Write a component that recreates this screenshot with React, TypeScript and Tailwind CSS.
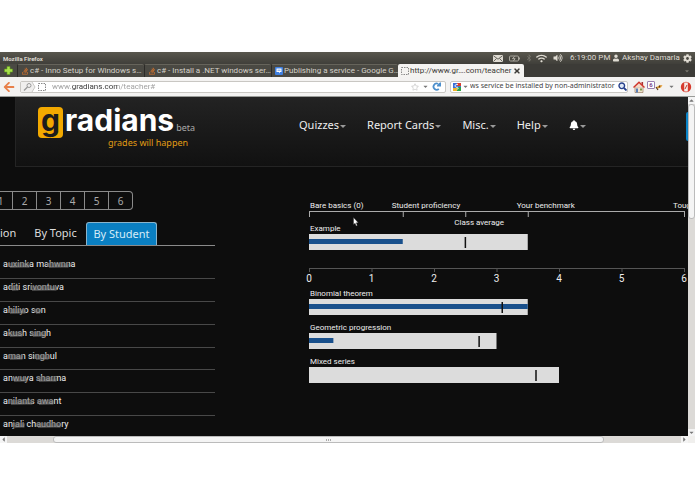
import { useState } from "react";
import {
  FaArrowLeft,
  FaBell,
  FaBluetoothB,
  FaCaretDown,
  FaCaretLeft,
  FaCaretRight,
  FaCaretUp,
  FaCog,
  FaRegStar,
  FaStackOverflow,
  FaTimes,
  FaUser,
  FaVolumeUp,
  FaWifi,
} from "react-icons/fa";

const browserTabs = [
  { title: "c# - Inno Setup for Windows s…", icon: "so" },
  { title: "c# - Install a .NET windows ser…", icon: "so" },
  { title: "Publishing a service - Google G…", icon: "group" },
  { title: "http://www.gr….com/teacher", icon: "blank" },
];

const menus = ["Quizzes", "Report Cards", "Misc.", "Help"];

// smudges are [start, end] pairs in px from the left of the name
const students = [
  { name: "auxinka mahwnna", smudges: [[5, 27], [44, 66]] },
  { name: "aditi srivontuva", smudges: [[7, 16], [27, 54]] },
  { name: "ahiliyo son", smudges: [[5, 23], [31, 38]] },
  { name: "akush singh", smudges: [[5, 20], [28, 42]] },
  { name: "aman singhul", smudges: [[5, 20], [31, 46]] },
  { name: "anwuya sharma", smudges: [[9, 24], [34, 54]] },
  { name: "anilants awant", smudges: [[6, 30], [34, 51]] },
  { name: "anjali chaudhory", smudges: [[10, 22], [33, 58]] },
];

const legend = [
  { label: "Bare basics (0)", at: 0, dx: 1, y: 11 },
  { label: "Student proficiency", at: 1.5, dx: -11, y: 11 },
  { label: "Class average", at: 2.5, dx: -11, y: 28 },
  { label: "Your benchmark", at: 3.5, dx: -11, y: 11 },
  { label: "Tough", at: 6, dx: -11, y: 11 },
];

const topics = [
  { name: "Binomial theorem", benchmark: 3.5, score: 3.5, average: 3.08 },
  { name: "Geometric progression", benchmark: 3, score: 0.39, average: 2.71 },
  { name: "Mixed series", benchmark: 4, score: 0, average: 3.62 },
];

const pct = (n: number) => `${(n / 6) * 100}%`;

const BlankIcon = () => (
  <svg viewBox="0 0 8 8" className="h-2 w-2 shrink-0">
    <rect x="0.5" y="0.5" width="7" height="7" fill="none" stroke="#888" strokeDasharray="1.5 1" />
  </svg>
);

const MenuCaret = () => (
  <svg viewBox="0 0 6 3" className="ml-[1px] mt-[3px] h-[3px] w-[6px]">
    <path d="M0 0h6L3 3z" fill="#999" />
  </svg>
);

const TabIcon = ({ kind }: { kind: string }) => {
  if (kind === "so") return <FaStackOverflow className="h-2 w-2 shrink-0 text-[#d9742c]" />;
  if (kind === "blank") return <BlankIcon />;
  return (
    <svg viewBox="0 0 8 8" className="h-2 w-2 shrink-0">
      <rect width="8" height="8" rx="1" fill="#3f7fe0" />
      <path d="M1.5 1.5h5v3.5H5L4 6.5V5H1.5z" fill="#fff" />
      <path d="M2.5 3.2h3" stroke="#3f7fe0" strokeWidth="0.8" />
    </svg>
  );
};

const SystemBar = () => (
  <div className="flex h-3 items-center bg-linear-to-b from-[#59574e] to-[#403f3a] px-[3px] font-['Roboto',sans-serif] text-[#dfdbd2]">
    <div className="flex-1 text-[6px] font-bold">Mozilla Firefox</div>
    <div className="flex items-center text-[8px]">
      <svg viewBox="0 0 10 7" className="mr-[6px] h-[7px] w-[10px]">
        <rect width="10" height="7" rx="0.5" fill="#dfdbd2" />
        <path d="M0.5 0.8L5 4.2l4.5-3.4M0.5 6.5l3-3M9.5 6.5l-3-3" fill="none" stroke="#4a4943" strokeWidth="0.8" />
      </svg>
      <svg viewBox="0 0 11 7" className="mr-[6px] h-[7px] w-[11px]">
        <rect x="0.5" y="1" width="9" height="5" rx="1" fill="none" stroke="#a9a69d" />
        <path d="M10.5 2.5v2" stroke="#a9a69d" />
        <path d="M5.5 1.5l-2 2.2h2.6L4.5 5.8" fill="none" stroke="#c9c6bd" strokeWidth="0.8" />
      </svg>
      <FaBluetoothB className="mr-1 h-2 w-[6px] text-[#77756c]" />
      <FaWifi className="mr-[6px] h-[9px] w-[11px]" />
      <FaVolumeUp className="mr-[7px] h-2 w-[10px]" />
      <span className="w-[43px] whitespace-nowrap">6:19:00 PM</span>
      <FaUser className="mr-[3px] h-2 w-[6px]" />
      <span className="w-[61px] whitespace-nowrap">Akshay Damarla</span>
      <FaCog className="h-[9px] w-[9px]" />
    </div>
  </div>
);

const TabStrip = () => (
  <div className="flex h-[13px] items-stretch bg-[#3c3b37] font-['Roboto',sans-serif] text-[8px] text-[#d5d2ca]">
    <button type="button" aria-label="New tab" className="flex w-[17px] shrink-0 items-center justify-center bg-[#4a4943]">
      <svg viewBox="0 0 9 9" className="h-[9px] w-[9px]">
        <path d="M3 0.5h3V3h2.5v3H6v2.5H3V6H0.5V3H3z" fill="#a7e04a" stroke="#5f9a1c" strokeWidth="0.6" />
      </svg>
    </button>
    {browserTabs.map((tab) => (
      <button
        type="button"
        key={tab.title}
        className={
          tab.icon === "blank"
            ? "flex w-[126px] items-center gap-[1px] whitespace-nowrap rounded-t-[2px] bg-[#f4f3f1] pl-[3px] text-[#3c3b37]"
            : "flex w-[127px] items-center gap-[1px] whitespace-nowrap rounded-t-[2px] border-l border-t border-[#2c2b28] border-t-[#66645b] bg-[#4a4943] pl-[3px]"
        }
      >
        <TabIcon kind={tab.icon} />
        <span>{tab.title}</span>
        {tab.icon === "blank" && <FaTimes className="ml-auto mr-[3px] h-2 w-2 shrink-0" />}
      </button>
    ))}
    <FaCaretDown className="mb-auto ml-auto mr-[5px] mt-1 h-[6px] w-[6px] text-[#77756c]" />
  </div>
);

const Toolbar = () => {
  const [url, setUrl] = useState("www.gradians.com/teacher#");
  const [query, setQuery] = useState("ws service be installed by non-administrator");
  return (
    <div className="flex h-5 items-center border-b border-[#9a9c99] bg-[#f3f2f1] px-[3px] font-['Roboto',sans-serif]">
      <button type="button" aria-label="Back" className="mr-[5px] shrink-0">
        <FaArrowLeft className="h-3 w-3 text-[#e8804a]" />
      </button>
      <div className="flex h-3 flex-1 items-center rounded-[2px] border border-[#c9c7c3] bg-white pr-1">
        <svg viewBox="0 0 15 10" className="h-[10px] w-[15px] shrink-0">
          <path d="M0 0h11l3 5-3 5H0z" fill="#f0efee" />
          <path d="M11 0l3 5-3 5" fill="none" stroke="#c9c7c3" />
          <circle cx="8" cy="3.5" r="2" fill="none" stroke="#999" />
          <path d="M6.5 5L3 8.5" stroke="#999" strokeWidth="1.2" />
        </svg>
        <div className="mx-[2px]">
          <BlankIcon />
        </div>
        <input
          aria-label="Address"
          value={url}
          onChange={(e) => setUrl(e.target.value)}
          className="ml-1 min-w-0 flex-1 bg-[linear-gradient(90deg,#9b9b9b_20px,#333_20px,#333_66px,#9b9b9b_66px)] bg-clip-text text-[8px] text-transparent outline-none"
        />
        <FaRegStar className="h-2 w-2 text-[#ccc]" />
        <FaCaretDown className="mx-[3px] h-[7px] w-[7px] text-[#777]" />
        <svg viewBox="0 0 9 9" className="h-[9px] w-[9px]">
          <path d="M6.8 6.8A3.1 3.1 0 1 1 6 1.8" fill="none" stroke="#4d8fcc" strokeWidth="1.8" />
          <path d="M5 4.4V3.2L7 1l2-.8v4.2z" fill="#4d8fcc" />
        </svg>
      </div>
      <div className="ml-1 flex h-3 w-[178px] shrink-0 items-center rounded-[2px] border border-[#c9c7c3] bg-white pl-[2px]">
        <svg viewBox="0 0 8 8" className="h-2 w-2 shrink-0">
          <rect width="8" height="8" fill="#3b6fd6" />
          <path d="M4 0h4v3H4z" fill="#d8412f" />
          <path d="M4 4h4v4H4z" fill="#2f9e44" />
          <path d="M0 5h4v3H0z" fill="#f0b429" />
          <path d="M5 1.5a2 1.5 0 1 0-.5 2.8c1 .4.8 2-.7 2" fill="none" stroke="#fff" />
        </svg>
        <FaCaretDown className="mx-[1px] h-[7px] w-[7px] shrink-0 text-[#777]" />
        <input
          aria-label="Search"
          value={query}
          onChange={(e) => setQuery(e.target.value)}
          className="min-w-0 flex-1 font-['Noto_Sans',sans-serif] text-[7px] text-[#444] outline-none"
        />
        <svg viewBox="0 0 9 9" className="h-[9px] w-[9px] shrink-0">
          <circle cx="3.8" cy="3.8" r="2.8" fill="#dfe8f6" stroke="#27408b" strokeWidth="1.4" />
          <path d="M6 6l2.5 2.5" stroke="#27408b" strokeWidth="1.8" />
        </svg>
      </div>
      <svg viewBox="0 0 12 12" className="ml-[5px] h-3 w-3 shrink-0">
        <path d="M2 6h8v5.5H2z" fill="#efe2cf" stroke="#8a6a4a" strokeWidth="0.6" />
        <path d="M8.5 1h1.6v3H8.5z" fill="#a33" />
        <path d="M0.5 6.5L6 1.2l5.5 5.3" fill="#f3d9c8" stroke="#d0362b" strokeWidth="1.5" />
        <path d="M3 7.5h2v4H3z" fill="#5a7fb8" />
        <path d="M7 7.5h2v2H7z" fill="#7a9a4a" />
      </svg>
      <span className="mb-1 ml-[2px] flex h-2 w-2 shrink-0 items-center justify-center rounded-[1px] border border-[#9a7fb0] bg-white text-[6px] font-bold leading-none text-[#7a3f8a]">
        6
      </span>
      <svg viewBox="0 0 8 8" className="h-2 w-2 shrink-0">
        <path d="M1 4.5L4 2.5l3.5-.5L6 4.5 3 5.5z" fill="#e8a13a" />
        <path d="M1 4l2 3M4 4.5l1-2" stroke="#5a3a1a" strokeWidth="1.2" />
      </svg>
      <FaCaretDown className="ml-[5px] mr-[5px] h-[7px] w-[7px] shrink-0 text-[#777]" />
      <svg viewBox="0 0 12 12" className="h-3 w-3 shrink-0">
        <circle cx="6" cy="6" r="5.2" fill="#d63a2c" />
        <path d="M4.2 1.5h3.6v9H4.2z" fill="#f6ece8" />
        <path d="M5 8l2-4" stroke="#c43a2c" />
      </svg>
    </div>
  );
};

const Header = () => (
  <header className="ml-[15px] flex h-[70px] border-b border-l border-[#242424] bg-linear-to-b from-[#232323] to-[#111] pl-[22px]">
    <div className="w-[261px] shrink-0 pt-[10px]">
      <div className="flex h-[31px] font-['Inter',sans-serif] text-[30px] font-bold text-white">
        <span className="flex h-[31px] w-[25px] shrink-0 justify-center rounded-[4px] bg-[#f2a900] leading-[26px] text-[#1c1c1c]">
          g
        </span>
        <span className="ml-[2px] leading-[26px]">radians</span>
        <span className="ml-[2px] pt-[15px] font-['Noto_Sans',sans-serif] text-[9px] font-normal leading-3 text-[#aaa]">
          beta
        </span>
      </div>
      <div className="pl-[70px] text-[9px] leading-[10px] text-[#e09c14]">grades will happen</div>
    </div>
    <nav className="flex h-[56px] items-center gap-[21px] text-[11px] text-[#eee]">
      {menus.map((menu) => (
        <button type="button" key={menu} className="flex items-center whitespace-nowrap">
          {menu}
          <MenuCaret />
        </button>
      ))}
      <button type="button" aria-label="Notifications" className="flex items-center">
        <FaBell className="h-[10px] w-[10px] text-white" />
        <MenuCaret />
      </button>
    </nav>
    <button type="button" aria-label="Account" className="ml-auto mt-[15px] h-[29px] w-[2px] rounded-l-[2px] bg-[#0a84c8]" />
  </header>
);

const Smudge = ({ from, to }: { from: number; to: number }) => (
  <g fill="none">
    <path d={`M${from} 6.5H${to}`} stroke="#0d0d0d" strokeOpacity="0.35" strokeWidth="8" />
    <path d={`M${from} 6L${(from + to) / 2} 5.5L${to} 6.5`} stroke="#8f8f8f" strokeOpacity="0.4" strokeWidth="4" />
    <path d={`M${from + 2} 8L${to - 1} 7.5`} stroke="#999" strokeOpacity="0.4" strokeWidth="2" />
  </g>
);

const StudentPanel = () => {
  const [page, setPage] = useState(0);
  return (
    <section className="w-[215px] shrink-0">
      <div className="-ml-[11px] flex pt-[24px]">
        {[1, 2, 3, 4, 5, 6].map((n) => (
          <button
            type="button"
            key={n}
            onClick={() => setPage(n)}
            aria-pressed={page === n}
            className="h-[19px] w-6 border border-l-0 border-[#8a8a8a] text-[10px] leading-none text-[#aaa] last:rounded-r-[4px]"
          >
            {n}
          </button>
        ))}
      </div>
      <div className="mt-3 flex h-6 items-stretch border-b border-[#8a8a8a] text-[11px] text-[#ddd]">
        <button type="button" className="w-[14px] text-left">
          ion
        </button>
        <button type="button" className="ml-[11px] w-[61px] whitespace-nowrap">
          By Topic
        </button>
        <button
          type="button"
          className="w-[71px] whitespace-nowrap rounded-t-[3px] border border-b-0 border-[#8ab4cc] bg-[#0a7fc2] text-[#d6ecf8]"
        >
          By Student
        </button>
      </div>
      <ul className="mt-[10px] flex h-[182px] flex-col font-['Roboto',sans-serif] text-[9px] text-[#eee]">
        {students.map((s) => (
          <li key={s.name} className="flex-1 border-b border-[#484848] pl-[3px] leading-[17px] last:border-b-0">
            <a href="#" className="relative whitespace-nowrap">
              {s.name}
              <svg className="absolute left-0 top-0 h-4 w-20">
                {s.smudges.map(([from, to]) => (
                  <Smudge key={from} from={from} to={to} />
                ))}
              </svg>
            </a>
          </li>
        ))}
      </ul>
    </section>
  );
};

type BarProps = { name: string; benchmark: number; score: number; average: number; y: number };

const Bar = ({ name, benchmark, score, average, y }: BarProps) => (
  <g>
    <text x="1" y={y - 3} fontSize="8" fill="#eee">
      {name}
    </text>
    <rect x="0" y={y} width={pct(benchmark)} height="16" fill="#dcdcdc" />
    <rect x="0" y={y + 5} width={pct(score)} height="5" fill="#19508c" />
    <rect x={pct(average)} y={y + 3} width="1.5" height="11" fill="#111" />
  </g>
);

const Chart = () => (
  <section className="relative ml-[94px] min-w-0 flex-1 pr-1 font-['Roboto',sans-serif]">
    <svg className="block h-[250px] w-full overflow-visible">
      <g transform="translate(0 30)">
        {legend.map((l) => (
          <svg key={l.label} x={pct(l.at)} className="overflow-visible">
            <text x={l.dx} y={l.y} fontSize="8" fill="#eee">
              {l.label}
            </text>
            <rect y="14" width="1" height="6" fill="#aaa" />
          </svg>
        ))}
        <rect y="14" width="100%" height="1" fill="#aaa" />
        <Bar name="Example" benchmark={3.5} score={1.5} average={2.49} y={37} />
        <rect y="71" width="100%" height="1" fill="#555" />
        {[0, 1, 2, 3, 4, 5, 6].map((n) => (
          <g key={n}>
            <rect x={pct(n)} y="71" width="1" height="4" fill="#555" />
            <text x={pct(n)} y="85" fontSize="10" fill="#eee" textAnchor="middle">
              {n}
            </text>
          </g>
        ))}
        {topics.map((t, i) => (
          <Bar key={t.name} {...t} y={102 + i * 34} />
        ))}
      </g>
    </svg>
    <svg viewBox="0 0 6 10" className="absolute left-11 top-[50px] h-[10px] w-[6px]">
      <path d="M0.5 0.5v7l1.6-1.3 1 2.8 1.2-.5-1-2.7h2z" fill="#fff" stroke="#222" strokeWidth="0.4" />
    </svg>
  </section>
);

export default function App() {
  return (
    <div className="bg-white py-[52px] font-['Noto_Sans',sans-serif]">
      <SystemBar />
      <TabStrip />
      <Toolbar />
      <div className="flex">
        <div className="flex min-w-0 flex-1 flex-col overflow-hidden bg-[#0d0d0d]">
          <Header />
          <main className="flex h-[269px] overflow-hidden">
            <StudentPanel />
            <Chart />
          </main>
        </div>
        <div className="flex w-[7px] shrink-0 flex-col items-center bg-[#dcdad7] text-[#777]">
          <FaCaretUp className="h-[7px] w-[7px] shrink-0 bg-[#f4f4f4]" />
          <div className="h-[115px] w-full rounded-[3px] border border-[#bbb] bg-[#f4f4f4]" />
          <FaCaretDown className="mt-auto h-[7px] w-[7px] shrink-0 bg-[#f4f4f4]" />
        </div>
      </div>
      <div className="flex h-[7px] items-center bg-[#f0efed] pr-[7px] text-[#777]">
        <div className="flex h-full w-full items-center bg-[#dcdad7]">
          <FaCaretLeft className="h-[7px] w-[7px] shrink-0 bg-[#f4f4f4]" />
          <div className="ml-[46px] mr-[77px] flex h-full flex-1 items-center justify-center gap-[1px] rounded-[3px] border border-[#bbb] bg-[#f4f4f4]">
            <span className="h-[2px] w-[1px] bg-[#aaa]" />
            <span className="h-[2px] w-[1px] bg-[#aaa]" />
            <span className="h-[2px] w-[1px] bg-[#aaa]" />
          </div>
          <FaCaretRight className="h-[7px] w-[7px] shrink-0 bg-[#f4f4f4]" />
        </div>
      </div>
    </div>
  );
}
